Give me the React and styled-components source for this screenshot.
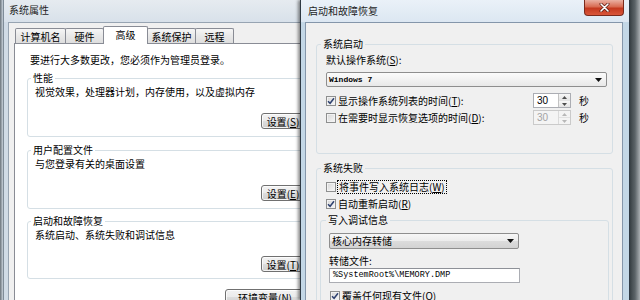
import React from "react";
import styled, { createGlobalStyle, css } from "styled-components";

const GlobalStyle = createGlobalStyle`
  html, body {
    margin: 0;
    padding: 0;
  }
  body {
    width: 640px;
    height: 300px;
    overflow: hidden;
    font-family: "Noto Sans CJK SC", "Noto Sans", sans-serif;
    font-size: 10px;
    color: #000;
  }
`;

const Desktop = styled.div`
  display: flex;
  width: 640px;
  height: 300px;
  overflow: hidden;
  background: #4a5258;
`;

const EdgeSliver = styled.div`
  flex: 0 0 3px;
  background: linear-gradient(90deg, #6a737a, #c8d2dc);
`;

const BackSlot = styled.div`
  flex: 0 0 297px;
  overflow: hidden;
`;

const OuterShade = styled.div`
  flex: 1;
  background: linear-gradient(90deg, #3a4246 0%, #5c6468 50%, #a9aeb1 100%);
`;

const Window = styled.div`
  flex: 0 0 ${(p) => p.$width}px;
  width: ${(p) => p.$width}px;
  height: 300px;
  box-sizing: border-box;
  display: flex;
  flex-direction: column;
  position: relative;
  border-left: 1px solid ${(p) => (p.$active ? "#2f3a44" : "#7f8c98")};
  border-right: 1px solid ${(p) => (p.$active ? "#2f3a44" : "#7f8c98")};
  background: ${(p) => (p.$active ? "#c3d7e6" : "#d0dbe6")};
  ${(p) =>
    p.$active &&
    css`
      box-shadow: -2px 0 3px rgba(0, 0, 0, 0.45);
    `}
`;

const TitleBar = styled.div`
  flex: 0 0 22px;
  display: flex;
  align-items: flex-start;
  background: ${(p) =>
    p.$active
      ? "linear-gradient(180deg, #eaf1f8 0%, #dce7f2 100%)"
      : "linear-gradient(180deg, #e6ebf0 0%, #d8e1ea 100%)"};
`;

const TitleText = styled.span`
  margin: ${(p) => p.$top}px 0 0 ${(p) => p.$left}px;
  line-height: 12px;
  font-size: 10px;
  color: #1e1e1e;
`;

const CloseButton = styled.div`
  margin: 0 5px 0 auto;
  width: 40px;
  height: 16px;
  box-sizing: border-box;
  display: flex;
  align-items: center;
  justify-content: center;
  border: 1px solid #7a2a1c;
  border-top: none;
  border-radius: 0 0 4px 4px;
  background: linear-gradient(180deg, #eab0a2 0%, #d86b52 45%, #c4391f 55%, #d9563a 100%);
`;

const Client = styled.div`
  flex: 1;
  min-height: 0;
  display: flex;
  flex-direction: column;
  margin: 0 ${(p) => p.$mr}px 0 ${(p) => p.$ml}px;
  padding: 0 ${(p) => p.$pr}px 0 ${(p) => p.$pl}px;
  background: #f0f0f0;
  border: 1px solid ${(p) => (p.$active ? "#8496aa" : "#97a4b2")};
  border-bottom: none;
`;

const TabStrip = styled.div`
  flex: 0 0 20px;
  display: flex;
  align-items: flex-end;
  margin-left: 1px;
`;

const Tab = styled.div`
  box-sizing: border-box;
  width: ${(p) => p.$w}px;
  height: ${(p) => (p.$selected ? 18 : 15)}px;
  margin-left: -1px;
  padding-top: 2px;
  line-height: 12px;
  text-align: center;
  border: 1px solid #898c95;
  border-bottom: none;
  border-radius: 2px 2px 0 0;
  background: ${(p) =>
    p.$selected ? "#ffffff" : "linear-gradient(180deg, #f6f6f6 0%, #e8e8e8 50%, #dedede 100%)"};
  ${(p) =>
    p.$selected &&
    css`
      position: relative;
      z-index: 1;
      margin-bottom: -1px;
    `}
  &:first-child {
    margin-left: 0;
  }
`;

const TabPanel = styled.div`
  flex: 1;
  display: flex;
  flex-direction: column;
  background: #ffffff;
  border: 1px solid #898c95;
  padding: 10px 10px 0 12px;
`;

const Note = styled.div`
  margin-left: 3px;
  line-height: 12px;
`;

const GroupBox = styled.fieldset`
  margin: ${(p) => p.$mt || 0}px ${(p) => p.$mr || 0}px 0 ${(p) => p.$ml || 0}px;
  padding: ${(p) => p.$pad};
  min-width: 0;
  border: 1px solid #d5dfe5;
  border-radius: 3px;
`;

const Legend = styled.legend`
  margin-left: ${(p) => p.$ml}px;
  padding: 0 2px;
  line-height: 12px;
  font-size: 10px;
`;

const Text = styled.div`
  line-height: 12px;
  margin-top: ${(p) => p.$mt || 0}px;
  white-space: nowrap;
`;

const Button = styled.button`
  display: block;
  box-sizing: border-box;
  width: ${(p) => p.$w}px;
  height: 16px;
  margin: ${(p) => p.$mt}px 0 0 auto;
  padding: 0;
  border: 1px solid #707070;
  border-radius: 3px;
  background: linear-gradient(180deg, #f2f2f2 0%, #ebebeb 50%, #dddddd 51%, #cfcfcf 100%);
  box-shadow: inset 0 0 0 1px rgba(255, 255, 255, 0.75);
  font-family: inherit;
  font-size: 10px;
  line-height: 13px;
  color: #000;
  white-space: nowrap;
`;

const Key = styled.span`
  text-decoration: underline;
`;

const ComboBox = styled.div`
  box-sizing: border-box;
  display: flex;
  align-items: center;
  width: ${(p) => (p.$w ? `${p.$w}px` : "auto")};
  height: ${(p) => p.$h}px;
  margin-top: ${(p) => p.$mt}px;
  padding: 0 4px 0 2px;
  border: 1px solid #8e8e8e;
  border-radius: 2px;
  background: ${(p) =>
    p.$light
      ? "linear-gradient(180deg, #fbfbfb 0%, #f2f2f2 50%, #e8e8e8 100%)"
      : "linear-gradient(180deg, #f6f6f6 0%, #ececec 50%, #dcdcdc 51%, #d2d2d2 100%)"};
`;

const ComboValue = styled.span`
  flex: 1;
  white-space: nowrap;
  ${(p) =>
    p.$mono
      ? css`
          font-family: "Liberation Mono", monospace;
          font-weight: bold;
          font-size: 8px;
        `
      : css`
          font-size: 10px;
        `}
  line-height: 12px;
`;

const TextBox = styled.div`
  box-sizing: border-box;
  width: ${(p) => p.$w}px;
  height: 15px;
  margin-top: ${(p) => p.$mt}px;
  padding-left: 3px;
  border: 1px solid #abadb3;
  border-top-color: #8e9198;
  background: #ffffff;
  font-family: "Liberation Mono", monospace;
  font-size: 8.5px;
  line-height: 13px;
  white-space: nowrap;
`;

const CheckRow = styled.div`
  display: flex;
  align-items: center;
  height: ${(p) => p.$h || 14}px;
  margin-top: ${(p) => p.$mt || 0}px;
  margin-left: ${(p) => p.$ml || 0}px;
`;

const CheckBox = styled.span`
  flex: 0 0 auto;
  box-sizing: border-box;
  width: 10px;
  height: 10px;
  display: flex;
  align-items: center;
  justify-content: center;
  border: 1px solid #8e8f8f;
  background: linear-gradient(135deg, #d6d6d6 0%, #f7f7f7 100%);
  box-shadow: inset 0 0 0 1px #f2f2f2;
`;

const CheckLabel = styled.span`
  margin-left: 2px;
  line-height: 12px;
  white-space: nowrap;
  flex: ${(p) => (p.$grow ? 1 : "none")};
  ${(p) =>
    p.$focused &&
    css`
      outline: 1px dotted #000;
      padding: 0 1px;
    `}
`;

const Spin = styled.div`
  flex: 0 0 38px;
  box-sizing: border-box;
  height: 15px;
  display: flex;
  border: 1px solid ${(p) => (p.$disabled ? "#cacaca" : "#abadb3")};
  background: ${(p) => (p.$disabled ? "#f4f4f4" : "#ffffff")};
`;

const SpinValue = styled.span`
  flex: 1;
  padding-left: 3px;
  font-family: "Liberation Sans", sans-serif;
  font-size: 10px;
  line-height: 13px;
  color: ${(p) => (p.$disabled ? "#a3a3a3" : "#000")};
`;

const SpinButtons = styled.div`
  flex: 0 0 11px;
  display: flex;
  flex-direction: column;
  border-left: 1px solid ${(p) => (p.$disabled ? "#dadada" : "#c3c3c3")};
`;

const SpinArrow = styled.div`
  flex: 1;
  display: flex;
  align-items: center;
  justify-content: center;
  background: ${(p) => (p.$disabled ? "#f4f4f4" : "linear-gradient(180deg, #f7f7f7, #e4e4e4)")};
  & + & {
    border-top: 1px solid ${(p) => (p.$disabled ? "#e2e2e2" : "#cfcfcf")};
  }
`;

const Unit = styled.span`
  flex: 0 0 36px;
  box-sizing: border-box;
  padding-left: 8px;
  line-height: 12px;
`;

function Check({ checked }) {
  return (
    <CheckBox>
      {checked && (
        <svg width="8" height="8" viewBox="0 0 8 8">
          <path d="M1 4.2 L3.1 6.3 L7 1.3" fill="none" stroke="#2f4270" strokeWidth="1.5" />
        </svg>
      )}
    </CheckBox>
  );
}

function DropArrow() {
  return (
    <svg width="7" height="4" viewBox="0 0 7 4">
      <path d="M0 0 H7 L3.5 4 Z" fill="#111" />
    </svg>
  );
}

function SpinBox({ value, disabled }) {
  const c = disabled ? "#b8b8b8" : "#4d4d4d";
  return (
    <Spin $disabled={disabled}>
      <SpinValue $disabled={disabled}>{value}</SpinValue>
      <SpinButtons $disabled={disabled}>
        <SpinArrow $disabled={disabled}>
          <svg width="5" height="3" viewBox="0 0 5 3">
            <path d="M0 3 H5 L2.5 0 Z" fill={c} />
          </svg>
        </SpinArrow>
        <SpinArrow $disabled={disabled}>
          <svg width="5" height="3" viewBox="0 0 5 3">
            <path d="M0 0 H5 L2.5 3 Z" fill={c} />
          </svg>
        </SpinArrow>
      </SpinButtons>
    </Spin>
  );
}

const tabs = [
  { label: "计算机名", w: 51 },
  { label: "硬件", w: 39 },
  { label: "高级", w: 45, selected: true },
  { label: "系统保护", w: 49 },
  { label: "远程", w: 39 },
];

export default function App() {
  return (
    <>
      <GlobalStyle />
      <Desktop>
        <EdgeSliver />
        <BackSlot>
          <Window $width={330}>
            <TitleBar>
              <TitleText $top={4} $left={5}>系统属性</TitleText>
            </TitleBar>
            <Client $ml={4} $mr={4} $pl={5} $pr={5}>
              <TabStrip>
                {tabs.map((t) => (
                  <Tab key={t.label} $w={t.w} $selected={t.selected}>
                    {t.label}
                  </Tab>
                ))}
              </TabStrip>
              <TabPanel>
                <Note>要进行大多数更改，您必须作为管理员登录。</Note>
                <GroupBox $mt={6} $pad="2px 5px 7px 7px">
                  <Legend $ml={-4}>性能</Legend>
                  <Text>视觉效果，处理器计划，内存使用，以及虚拟内存</Text>
                  <Button $w={44} $mt={15}>
                    设置(<Key>S</Key>)
                  </Button>
                </GroupBox>
                <GroupBox $mt={7} $pad="2px 5px 7px 7px">
                  <Legend $ml={-4}>用户配置文件</Legend>
                  <Text>与您登录有关的桌面设置</Text>
                  <Button $w={44} $mt={15}>
                    设置(<Key>E</Key>)
                  </Button>
                </GroupBox>
                <GroupBox $mt={6} $pad="2px 5px 6px 7px">
                  <Legend $ml={-4}>启动和故障恢复</Legend>
                  <Text>系统启动、系统失败和调试信息</Text>
                  <Button $w={44} $mt={15}>
                    设置(<Key>T</Key>)
                  </Button>
                </GroupBox>
                <Button $w={80} $mt={10} style={{ marginRight: 6 }}>
                  环境变量(<Key>N</Key>)
                </Button>
              </TabPanel>
            </Client>
          </Window>
        </BackSlot>

        <Window $width={330} $active>
          <TitleBar $active>
            <TitleText $top={5} $left={7}>启动和故障恢复</TitleText>
            <CloseButton>
              <svg width="11" height="9" viewBox="0 0 11 9">
                <path d="M2 1 L9 8 M9 1 L2 8" stroke="#5a1a10" strokeWidth="3" strokeLinecap="round" />
                <path d="M2 1 L9 8 M9 1 L2 8" stroke="#ffffff" strokeWidth="1.6" strokeLinecap="round" />
              </svg>
            </CloseButton>
          </TitleBar>
          <Client $active $ml={4} $mr={6} $pl={10} $pr={9}>
            <GroupBox $mt={15} $pad="4px 5px 28px 9px">
              <Legend $ml={-5}>系统启动</Legend>
              <Text>
                默认操作系统(<Key>S</Key>):
              </Text>
              <ComboBox $h={15} $mt={6} $light>
                <ComboValue $mono>Windows 7</ComboValue>
                <DropArrow />
              </ComboBox>
              <CheckRow $h={15} $mt={6}>
                <Check checked />
                <CheckLabel $grow>
                  显示操作系统列表的时间(<Key>T</Key>):
                </CheckLabel>
                <SpinBox value="30" />
                <Unit>秒</Unit>
              </CheckRow>
              <CheckRow $h={15} $mt={2}>
                <Check />
                <CheckLabel $grow>
                  在需要时显示恢复选项的时间(<Key>D</Key>):
                </CheckLabel>
                <SpinBox value="30" disabled />
                <Unit>秒</Unit>
              </CheckRow>
            </GroupBox>

            <GroupBox $mt={8} $pad="6px 5px 10px 9px">
              <Legend $ml={-5}>系统失败</Legend>
              <CheckRow>
                <Check />
                <CheckLabel $focused>
                  将事件写入系统日志(<Key>W</Key>)
                </CheckLabel>
              </CheckRow>
              <CheckRow $mt={3}>
                <Check checked />
                <CheckLabel>
                  自动重新启动(<Key>R</Key>)
                </CheckLabel>
              </CheckRow>
              <GroupBox $mt={3} $ml={-6} $mr={-2} $pad="7px 5px 10px 8px">
                <Legend $ml={-3}>写入调试信息</Legend>
                <ComboBox $w={190} $h={16} $mt={0}>
                  <ComboValue>核心内存转储</ComboValue>
                  <DropArrow />
                </ComboBox>
                <Text $mt={6}>转储文件:</Text>
                <TextBox $w={191} $mt={1}>
                  {"%SystemRoot%\\MEMORY.DMP"}
                </TextBox>
                <CheckRow $mt={6} $ml={1}>
                  <Check checked />
                  <CheckLabel>
                    覆盖任何现有文件(<Key>O</Key>)
                  </CheckLabel>
                </CheckRow>
              </GroupBox>
            </GroupBox>
          </Client>
        </Window>
        <OuterShade />
      </Desktop>
    </>
  );
}
